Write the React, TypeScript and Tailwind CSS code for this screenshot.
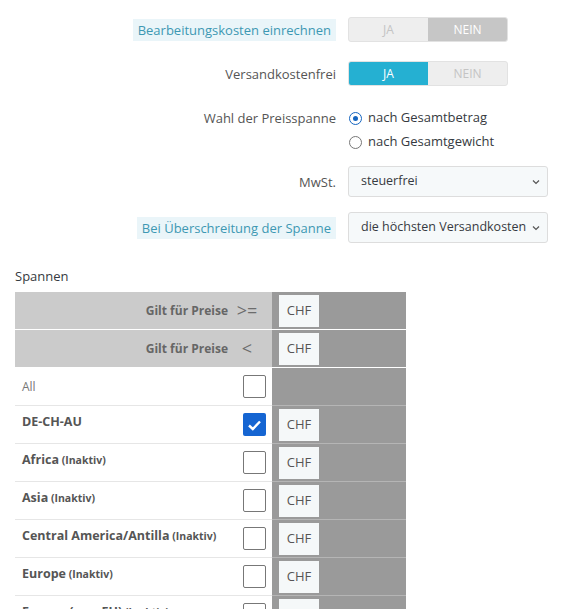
import React from "react";

const font = { fontFamily: '"Open Sans", "Noto Sans", sans-serif' };

type Zone = { name: string; inactive?: boolean; checked?: boolean; hasPrice?: boolean };

const zones: Zone[] = [
  { name: "DE-CH-AU", checked: true },
  { name: "Africa", inactive: true },
  { name: "Asia", inactive: true },
  { name: "Central America/Antilla", inactive: true },
  { name: "Europe", inactive: true },
  { name: "Europe (non-EU)", inactive: true },
];

const Toggle = ({ yes }: { yes: boolean }) => (
  <div className="flex h-[25px] w-[160px] rounded-[3px] bg-[#eeeeee] text-[12px] overflow-hidden border border-[#e2e2e2]">
    <div
      className={
        "flex-1 flex items-center justify-center " +
        (yes ? "bg-[#25b0d2] text-white" : "text-[#c4c4c4]")
      }
    >
      JA
    </div>
    <div
      className={
        "flex-1 flex items-center justify-center " +
        (!yes ? "bg-[#c6c6c6] text-white" : "text-[#c4c4c4]")
      }
    >
      NEIN
    </div>
  </div>
);

const Label = ({ children, hint }: { children: React.ReactNode; hint?: boolean }) => (
  <div className="flex justify-end pr-[6px]">
    <span
      className={
        hint
          ? "bg-[#eaf5f9] text-[#3d98b3] px-[5px] py-[1px] leading-[20px]"
          : "text-[#555555] leading-[20px]"
      }
    >
      {children}
    </span>
  </div>
);

const Select = ({ value }: { value: string }) => (
  <div className="flex h-[31px] w-[200px] items-center justify-between rounded-[3px] border border-[#dddddd] bg-[#f6f9fa] pl-[12px] pr-[6px] text-[12.5px] text-[#363a41]">
    <span className="whitespace-nowrap overflow-hidden">{value}</span>
    <svg width="10" height="10" viewBox="0 0 10 10" className="shrink-0 ml-[3px]">
      <path d="M2 3.5 L5 6.5 L8 3.5" fill="none" stroke="#555" strokeWidth="1.2" />
    </svg>
  </div>
);

const Radio = ({ checked, label }: { checked?: boolean; label: string }) => (
  <div className="flex items-center h-[24px] gap-[6px] pl-[1px]">
    <span
      className={
        "flex h-[13px] w-[13px] items-center justify-center rounded-full border-[1.5px] " +
        (checked ? "border-[#1565c0]" : "border-[#777777]")
      }
    >
      {checked && <span className="h-[5px] w-[5px] rounded-full bg-[#1565c0]" />}
    </span>
    <span className="text-[13px] text-[#363a41]">{label}</span>
  </div>
);

const Checkbox = ({ checked }: { checked?: boolean }) =>
  checked ? (
    <span className="flex h-[23px] w-[23px] items-center justify-center rounded-[2px] bg-[#1565d2]">
      <svg width="15" height="12" viewBox="0 0 15 12">
        <path d="M2 6.5 L5.8 10 L13 2.5" fill="none" stroke="white" strokeWidth="2.4" />
      </svg>
    </span>
  ) : (
    <span className="block h-[23px] w-[23px] rounded-[2px] border-[1.5px] border-[#777777] bg-white" />
  );

const Chf = () => (
  <div className="flex h-[32px] w-[40px] items-center justify-center bg-[#f5f8f9] text-[13px] text-[#555555]">
    CHF
  </div>
);

export default function App() {
  return (
    <div className="min-h-screen bg-white text-[13px]" style={font}>
      <div className="pt-[17px] grid grid-cols-[342px_200px] gap-x-[6px] items-center">
        <Label hint>Bearbeitungskosten einrechnen</Label>
        <Toggle yes={false} />

        <div className="col-span-2 h-[19px]" />
        <Label>Versandkostenfrei</Label>
        <Toggle yes />

        <div className="col-span-2 h-[20px]" />
        <div className="self-start pt-[2px]">
          <Label>Wahl der Preisspanne</Label>
        </div>
        <div>
          <Radio checked label="nach Gesamtbetrag" />
          <Radio label="nach Gesamtgewicht" />
        </div>

        <div className="col-span-2 h-[12px]" />
        <Label>MwSt.</Label>
        <Select value="steuerfrei" />

        <div className="col-span-2 h-[15px]" />
        <Label hint>Bei Überschreitung der Spanne</Label>
        <Select value="die höchsten Versandkosten anwenden" />
      </div>

      <div className="px-[15px] pt-[25px]">
        <div className="text-[13px] text-[#363a41] leading-[16px] mb-[8px]">Spannen</div>
        <div className="w-[391px] text-[12px]">
          {[">=", "<"].map((op) => (
            <div key={op} className="flex h-[38px] border-b-[1.5px] border-white">
              <div className="flex w-[257px] items-center justify-end bg-[#cbcbcb] pr-[6px]">
                <span className="font-bold text-[#666666]">Gilt für Preise</span>
                <span className="w-[38px] text-center text-[18px] text-[#6c6c6c]">{op}</span>
              </div>
              <div className="flex flex-1 items-center bg-[#9a9a9a] pl-[7px]">
                <Chf />
              </div>
            </div>
          ))}

          <div className="flex h-[38px]">
            <div className="flex w-[257px] items-center justify-between border-b border-[#e6e6e6] bg-white pl-[7px] pr-[6px]">
              <span className="text-[#777777]">All</span>
              <Checkbox />
            </div>
            <div className="flex-1 bg-[#9a9a9a] border-b border-[#b5b5b5]" />
          </div>

          {zones.map((z) => (
            <div key={z.name} className="flex h-[38px]">
              <div className="flex w-[257px] items-center justify-between border-b border-[#e6e6e6] bg-white pl-[7px] pr-[6px]">
                <span className="self-start pt-[7px] font-bold text-[#555555] text-[12.5px] whitespace-nowrap">
                  {z.name}
                  {z.inactive && <span className="text-[10.5px] font-bold"> (Inaktiv)</span>}
                </span>
                <Checkbox checked={z.checked} />
              </div>
              <div className="flex flex-1 items-center bg-[#9a9a9a] border-b border-[#b5b5b5] pl-[7px]">
                <Chf />
              </div>
            </div>
          ))}
        </div>
      </div>
    </div>
  );
}
